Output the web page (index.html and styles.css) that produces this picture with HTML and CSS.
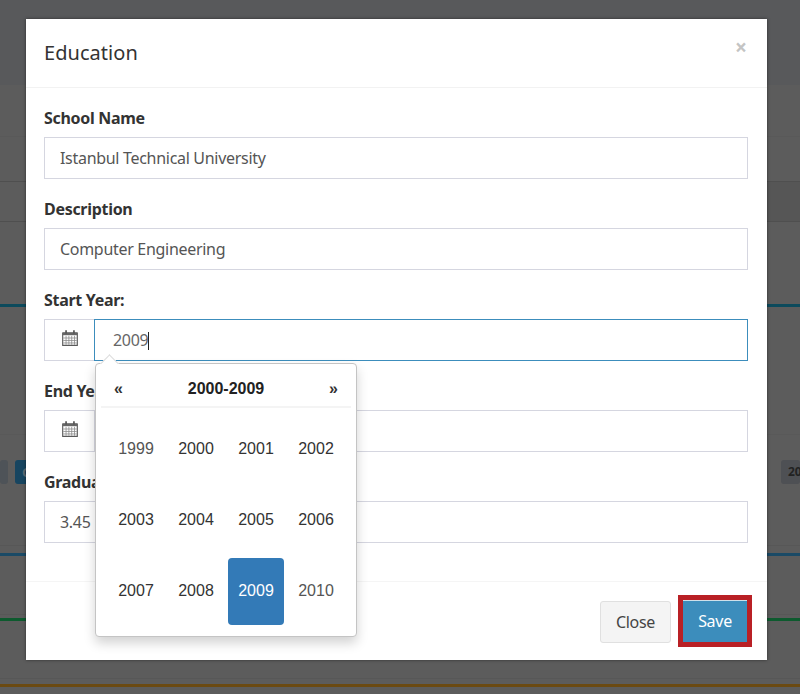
FILE: index.html
```html
<!DOCTYPE html>
<html lang="en">

<head>
  <meta charset="UTF-8" />
  <meta name="viewport" content="width=device-width, initial-scale=1.0" />
  <title>Education</title>
  <link rel="stylesheet" href="styles.css">
</head>

<body>
  <!-- page behind the modal, dimmed -->
  <div class="backdrop">
    <div class="bg-top"></div>
    <div class="bg-row bg-row-a"></div>
    <div class="bg-row bg-row-b"></div>
    <div class="bg-row bg-row-c"></div>
    <div class="bg-row bg-row-d"></div>
    <div class="bg-row bg-row-e"></div>
    <div class="bg-row bg-row-f">
      <span class="bg-badge bg-badge-grey"></span>
      <span class="bg-badge bg-badge-blue">C</span>
      <span class="bg-badge bg-badge-right">20</span>
    </div>
    <div class="bg-row bg-row-g"></div>
    <div class="bg-stripe bg-stripe-blue"></div>
    <div class="bg-row bg-row-h"></div>
    <div class="bg-stripe bg-stripe-green"></div>
    <div class="bg-row bg-row-i"></div>
    <div class="bg-stripe bg-stripe-brown"></div>
  </div>

  <div class="modal">
    <div class="modal-header">
      <h4>Education</h4>
      <span class="close">&times;</span>
    </div>
    <div class="modal-body">
      <div class="field">
        <label>School Name</label>
        <div class="input">Istanbul Technical University</div>
      </div>
      <div class="field">
        <label>Description</label>
        <div class="input">Computer Engineering</div>
      </div>
      <div class="field">
        <label>Start Year:</label>
        <div class="input-group">
          <span class="addon">
            <svg class="cal" viewBox="0 0 16 16"><path d="M1.500 3.500h13v11h-13z" fill="#fff" stroke="#5a5a5a" stroke-width="1"/><path d="M1.500 3h13v2.500h-13z" fill="#666"/><path d="M4.500 6v8M7 6v8M9.500 6v8M12 6v8M2 8h12M2 10.200h12M2 12.400h12" stroke="#8a8a8a" stroke-width=".7"/><path d="M4.500 1v3M11.500 1v3" stroke="#555" stroke-width="1.500"/></svg>
          </span>
          <div class="input focused">2009<span class="caret"></span></div>
        </div>
      </div>
      <div class="field">
        <label>End Year:</label>
        <div class="input-group">
          <span class="addon">
            <svg class="cal" viewBox="0 0 16 16"><path d="M1.500 3.500h13v11h-13z" fill="#fff" stroke="#5a5a5a" stroke-width="1"/><path d="M1.500 3h13v2.500h-13z" fill="#666"/><path d="M4.500 6v8M7 6v8M9.500 6v8M12 6v8M2 8h12M2 10.200h12M2 12.400h12" stroke="#8a8a8a" stroke-width=".7"/><path d="M4.500 1v3M11.500 1v3" stroke="#555" stroke-width="1.500"/></svg>
          </span>
          <div class="input"></div>
        </div>
      </div>
      <div class="field">
        <label>Graduation Grade</label>
        <div class="input">3.45</div>
      </div>
    </div>
    <div class="modal-footer">
      <button class="btn btn-close">Close</button>
      <button class="btn btn-save">Save</button>
    </div>

    <div class="datepicker">
      <div class="dp-head">
        <span class="dp-arrow">&laquo;</span>
        <span class="dp-title">2000-2009</span>
        <span class="dp-arrow">&raquo;</span>
      </div>
      <div class="dp-years">
        <span class="year old">1999</span>
        <span class="year">2000</span>
        <span class="year">2001</span>
        <span class="year">2002</span>
        <span class="year">2003</span>
        <span class="year">2004</span>
        <span class="year">2005</span>
        <span class="year">2006</span>
        <span class="year">2007</span>
        <span class="year">2008</span>
        <span class="year active">2009</span>
        <span class="year old">2010</span>
      </div>
    </div>
  </div>
</body>

</html>
```

FILE: styles.css
```css
html,
body {
  margin: 0;
  padding: 0;
}

body {
  position: relative;
  width: 800px;
  height: 694px;
  overflow: hidden;
  font-family: "Noto Sans", sans-serif;
  background-color: #5c5c5c;
  color: #333;
}

.backdrop {
  display: flex;
  flex-direction: column;
  height: 694px;
}

.bg-top {
  height: 85px;
  background-color: #58595b;
}

.bg-row {
  box-sizing: border-box;
  border-bottom: 1px solid #595959;
}

.bg-row-a { height: 52px; }
.bg-row-b { height: 45px; border-bottom-color: #4f4f4f; }
.bg-row-c {
  height: 40px;
  border-bottom-color: #4f4f4f;
  background: linear-gradient(to right, transparent 400px, #565656 400px);
}
.bg-row-d { height: 85px; border-bottom: 3px solid #0c4a5c; }
.bg-row-e { height: 128px; }
.bg-row-f {
  display: flex;
  align-items: flex-start;
  gap: 7px;
  height: 111px;
  padding-top: 25px;
  border-bottom-color: #575757;
}
.bg-row-g { height: 7px; border: 0; }
.bg-row-h { height: 59px; border-bottom-color: #575757; }
.bg-row-i { height: 58px; border-bottom-color: #575757; }

.bg-stripe {
  height: 3px;
}

.bg-stripe-blue { background-color: #1a4a66; }
.bg-stripe-green { background-color: #0d5a2e; margin-top: 3px; }
.bg-stripe-brown { background-color: #6b4a12; margin-top: 5px; }

.bg-badge {
  height: 24px;
  border-radius: 3px;
}

.bg-badge-grey { width: 8px; background-color: #4e5358; }
.bg-badge-blue {
  box-sizing: border-box;
  width: 24px;
  padding-left: 7px;
  background-color: #174560;
  color: #5c6b75;
  font-size: 13px;
  font-weight: 700;
  line-height: 24px;
}
.bg-badge-right {
  box-sizing: border-box;
  margin-left: auto;
  width: 19px;
  padding-left: 7px;
  overflow: hidden;
  background-color: #4e5054;
  color: #222;
  font-size: 12px;
  font-weight: 700;
  line-height: 24px;
}

.modal {
  position: absolute;
  left: 26px;
  top: 19px;
  width: 741px;
  height: 641px;
  background-color: #fff;
  box-shadow: 0 0 3px rgba(0, 0, 0, 0.5);
}

.modal-header {
  position: relative;
  box-sizing: border-box;
  height: 69px;
  padding: 18px 18px 0;
  border-bottom: 1px solid #f2f2f2;
}

.modal-header h4 {
  margin: 0;
  font-size: 20px;
  font-weight: 400;
  line-height: 32px;
  letter-spacing: 0.05px;
}

.close {
  position: absolute;
  right: 20px;
  top: 14px;
  font-size: 21px;
  font-weight: 700;
  line-height: 29px;
  color: #c4c4c4;
}

.modal-body {
  box-sizing: border-box;
  height: 494px;
  padding: 18px 19px 0 18px;
  border-bottom: 1px solid #f5f5f5;
}

.field {
  margin-bottom: 18px;
}

label {
  display: block;
  height: 24px;
  margin-bottom: 7px;
  font-size: 16px;
  font-weight: 700;
  line-height: 24px;
  letter-spacing: -0.3px;
}

.input {
  box-sizing: border-box;
  height: 42px;
  padding: 0 15px;
  border: 1px solid #d5d6e0;
  font-size: 16px;
  line-height: 40px;
  letter-spacing: -0.3px;
  color: #555;
  flex: 1;
}

.input-group {
  display: flex;
}

.addon {
  box-sizing: border-box;
  display: flex;
  justify-content: center;
  width: 50px;
  height: 42px;
  padding-top: 9px;
  border: 1px solid #d5d6e0;
  border-right: 0;
}

.cal {
  width: 18px;
  height: 18px;
}

.input.focused {
  padding-left: 18px;
  border-color: #3c8dbc;
  color: #666;
}

.caret {
  display: inline-block;
  width: 1px;
  height: 18px;
  background-color: #222;
  vertical-align: -4px;
}

.modal-footer {
  display: flex;
  justify-content: flex-end;
  align-items: flex-start;
  gap: 7px;
  padding: 19px 15px 0 0;
}

.btn {
  box-sizing: border-box;
  height: 42px;
  font-family: inherit;
  font-size: 16px;
  letter-spacing: -0.3px;
  border-radius: 3px;
}

.btn-close {
  width: 71px;
  border: 1px solid #e0e0e0;
  background-color: #f4f4f4;
  color: #444;
}

.btn-save {
  width: 74px;
  height: 52px;
  margin-top: -6px;
  border: 5px solid #b92025;
  border-radius: 0;
  background-color: #3c8dbc;
  box-shadow: inset 0 1px 0 #cfe0ea;
  color: #fff;
}

.datepicker {
  position: absolute;
  left: 69px;
  top: 344px;
  box-sizing: border-box;
  width: 262px;
  height: 274px;
  padding: 4px 5px;
  background-color: #fff;
  border: 1px solid #c4c4c4;
  border-radius: 4px;
  box-shadow: 0 6px 12px rgba(0, 0, 0, 0.18);
  font-family: "Liberation Sans", sans-serif;
}

.datepicker::before {
  content: "";
  position: absolute;
  left: 7px;
  top: -7px;
  width: 12px;
  height: 12px;
  background-color: #fff;
  transform: rotate(45deg);
  transform-origin: center;
  border-top: 1px solid #ddd;
  border-left: 1px solid #ddd;
}

.dp-head {
  display: flex;
  justify-content: space-between;
  align-items: center;
  box-sizing: border-box;
  height: 40px;
  padding: 4px 13px 0;
  border-bottom: 2px solid #f4f4f4;
  font-size: 16px;
  font-weight: 700;
  color: #222;
}

.dp-arrow {
  color: #333;
}

.dp-years {
  display: grid;
  grid-template-columns: repeat(4, 60px);
  grid-auto-rows: 67px;
  row-gap: 4px;
  justify-content: center;
  padding-top: 8px;
}

.year {
  display: flex;
  justify-content: center;
  align-items: center;
  padding-bottom: 1px;
  box-sizing: border-box;
  font-size: 16px;
  color: #333;
  border-radius: 4px;
}

.year.old {
  color: #555;
}

.year.active {
  width: 56px;
  justify-self: center;
  background-color: #337ab7;
  color: #fff;
}
```
